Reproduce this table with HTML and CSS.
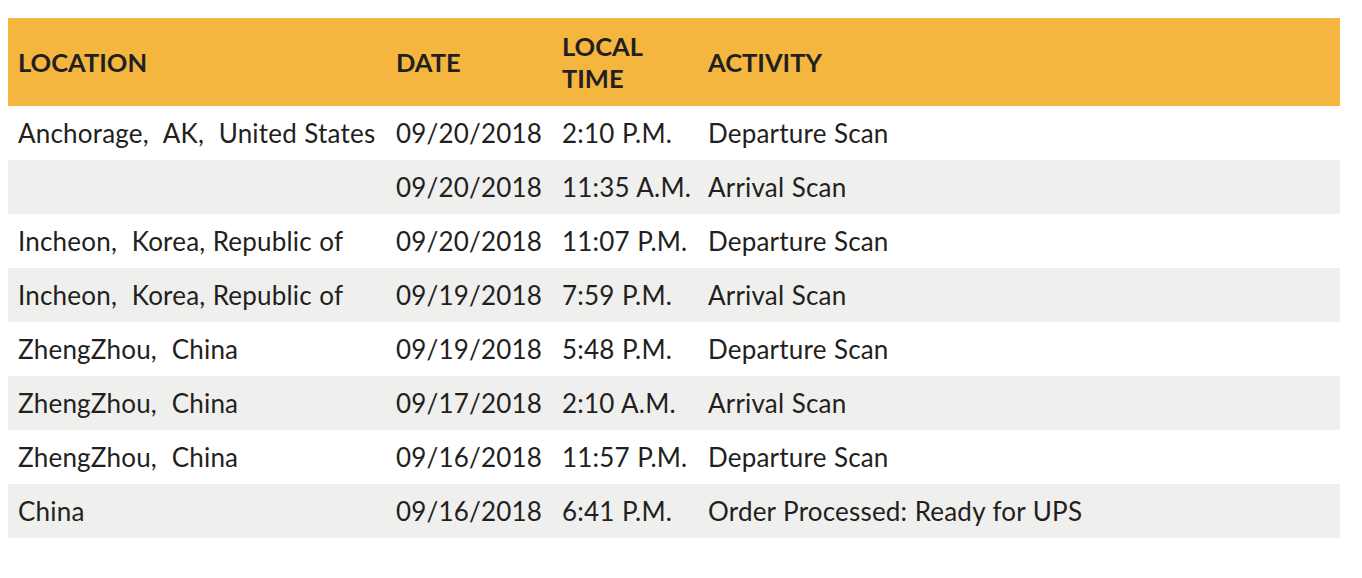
FILE: index.html
```html
<!DOCTYPE html>
<html lang="en">
<head>
<meta charset="utf-8">
<title>Tracking</title>
<link rel="stylesheet" href="styles.css">
</head>
<body>
<table class="track">
  <colgroup>
    <col class="c-loc">
    <col class="c-date">
    <col class="c-time">
    <col class="c-act">
  </colgroup>
  <thead>
    <tr>
      <th>LOCATION</th>
      <th>DATE</th>
      <th>LOCAL<br>TIME</th>
      <th>ACTIVITY</th>
    </tr>
  </thead>
  <tbody>
    <tr><td>Anchorage,&nbsp; AK,&nbsp; United States</td><td>09/20/2018</td><td>2:10 P.M.</td><td>Departure Scan</td></tr>
    <tr><td></td><td>09/20/2018</td><td>11:35 A.M.</td><td>Arrival Scan</td></tr>
    <tr><td>Incheon,&nbsp; Korea, Republic of</td><td>09/20/2018</td><td>11:07 P.M.</td><td>Departure Scan</td></tr>
    <tr><td>Incheon,&nbsp; Korea, Republic of</td><td>09/19/2018</td><td>7:59 P.M.</td><td>Arrival Scan</td></tr>
    <tr><td>ZhengZhou,&nbsp; China</td><td>09/19/2018</td><td>5:48 P.M.</td><td>Departure Scan</td></tr>
    <tr><td>ZhengZhou,&nbsp; China</td><td>09/17/2018</td><td>2:10 A.M.</td><td>Arrival Scan</td></tr>
    <tr><td>ZhengZhou,&nbsp; China</td><td>09/16/2018</td><td>11:57 P.M.</td><td>Departure Scan</td></tr>
    <tr><td>China</td><td>09/16/2018</td><td>6:41 P.M.</td><td>Order Processed: Ready for UPS</td></tr>
  </tbody>
</table>
</body>
</html>
```
FILE: styles.css
```css
body {
  margin: 8px;
  background: #ffffff;
  font-family: "Lato", "Open Sans", sans-serif;
  color: #231f20;
}
.track {
  margin-top: 10px;
  width: 1332px;
  border-collapse: collapse;
  table-layout: fixed;
}
.c-loc { width: 378px; }
.c-date { width: 166px; }
.c-time { width: 146px; }
.c-act { width: 642px; }
.track th {
  background: #f4b63f;
  height: 88px;
  padding: 0 10px;
  text-align: left;
  font-weight: 700;
  font-size: 25.5px;
  line-height: 32px;
  vertical-align: middle;
  color: #231f20;
}
.track td {
  height: 54px;
  padding: 0 10px;
  font-size: 26px;
  line-height: 32px;
  letter-spacing: 0.2px;
  word-spacing: 0.5px;
  white-space: nowrap;
  vertical-align: middle;
}
.track tbody tr:nth-child(even) td {
  background: #efefee;
}
```
